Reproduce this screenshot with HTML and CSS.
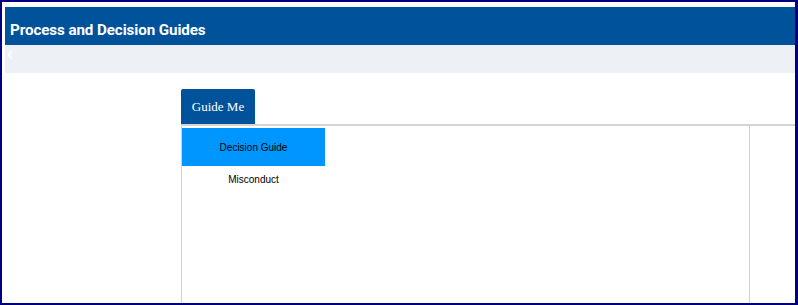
FILE: index.html
```html
<!DOCTYPE html>
<html>
<head>
<meta charset="utf-8">
<link rel="stylesheet" href="styles.css">
</head>
<body>
<div class="frame">
  <div class="inner">
    <header class="titlebar">
      <h1 class="title">Process and Decision Guides</h1>
    </header>
    <div class="subbar">
      <svg class="chevron" width="6" height="10" viewBox="0 0 6 10"><path d="M5 1 L1.5 5 L5 9" fill="none" stroke="#ffffff" stroke-width="1.6"/></svg>
    </div>
    <main class="main">
      <div class="tabs">
        <button class="tab">Guide Me</button>
      </div>
      <div class="tabline"></div>
      <div class="panel">
        <ul class="menu">
          <li class="item active">Decision Guide</li>
          <li class="item">Misconduct</li>
        </ul>
      </div>
    </main>
  </div>
</div>
</body>
</html>
```
FILE: styles.css
```css
html, body {
  margin: 0;
  padding: 0;
  background: #ffffff;
}
.frame {
  width: 798px;
  height: 305px;
  box-sizing: border-box;
  border: 2px solid #000080;
  border-right-width: 3px;
  overflow: hidden;
  background: #ffffff;
}
.inner {
  padding: 5px 0 0 3px;
  height: 100%;
  box-sizing: border-box;
  display: flex;
  flex-direction: column;
}
.titlebar {
  background: #00529b;
  height: 38px;
  display: flex;
  align-items: center;
  padding-left: 5px;
}
.title {
  margin: 0;
  padding-top: 8px;
  color: #ffffff;
  font-family: Roboto, "Liberation Sans", sans-serif;
  font-weight: 700;
  font-size: 15.2px;
  letter-spacing: -0.1px;
}
.subbar {
  background: #edf0f5;
  height: 28px;
  display: flex;
  align-items: flex-start;
  padding-left: 2px;
}
.chevron {
  margin-top: 5px;
}
.main {
  flex: 1;
  padding: 16px 0 0 176px;
  display: flex;
  flex-direction: column;
}
.tabs {
  display: flex;
}
.tab {
  width: 74px;
  height: 35px;
  background: #00529b;
  color: #ffffff;
  border: none;
  border-radius: 2px 2px 0 0;
  font-family: "Liberation Serif", serif;
  font-size: 13px;
  padding: 0;
  margin: 0;
}
.tabline {
  border-top: 2px solid #d3d3d3;
}
.panel {
  flex: 1;
  width: 569px;
  box-sizing: border-box;
  border-left: 1px solid #d0d0d0;
  border-right: 1px solid #d0d0d0;
}
.menu {
  list-style: none;
  margin: 2px 0 0 0;
  padding: 0;
  width: 143px;
}
.item {
  font-family: "Liberation Sans", Arial, sans-serif;
  font-size: 10px;
  color: #000000;
  text-align: center;
  height: 26px;
  line-height: 28px;
}
.item.active {
  background: #0096ff;
  height: 38px;
  line-height: 40px;
}
```
